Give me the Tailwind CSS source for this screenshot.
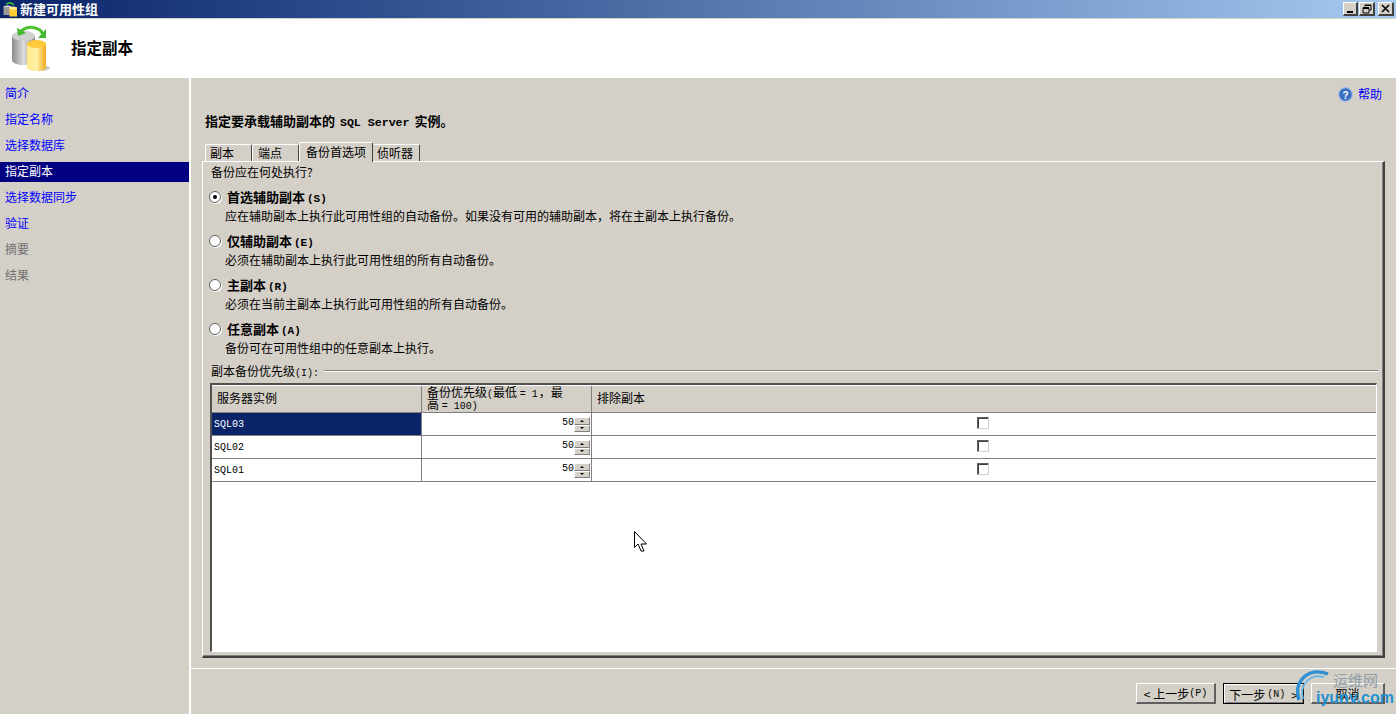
<!DOCTYPE html>
<html lang="zh">
<head>
<meta charset="utf-8">
<script src="https://cdn.jsdelivr.net/npm/@tailwindcss/browser@4"></script>
<title>新建可用性组</title>
</head>
<body class="m-0 overflow-hidden">
<div class="relative flex h-[714px] w-[1396px] flex-col overflow-hidden bg-[#d4d0c8] font-['Noto_Sans_CJK_SC',sans-serif] text-[12px] leading-[18px] text-black">

  <!-- title bar -->
  <div class="flex h-[18px] shrink-0 items-center bg-gradient-to-r from-[#0a246a] to-[#a6caf0]">
    <svg class="ml-[3px] h-[15px] w-[15px]" viewBox="0 0 15 15">
      <ellipse cx="4.500" cy="5" rx="4" ry="1.500" fill="#ddd"/><rect x=".5" y="5" width="8" height="8" fill="#999"/>
      <rect x="6.500" y="6" width="7.500" height="8.500" fill="#fc3"/><ellipse cx="10.200" cy="6" rx="3.800" ry="1.500" fill="#fe9"/>
      <path d="M3 2.500 Q7 -1 11 3" stroke="#3b3" stroke-width="1.500" fill="none"/>
    </svg>
    <span class="ml-[2px] text-[13px] font-bold text-white">新建可用性组</span>
    <div class="ml-auto mr-[2px] flex gap-[1px]">
      <div class="flex h-[14px] w-[15px] items-end justify-center border-t border-l border-r-2 border-b-2 border-t-white border-l-white border-r-[#404040] border-b-[#404040] bg-[#d4d0c8] pb-[1px]"><div class="h-[2px] w-[6px] bg-black"></div></div>
      <div class="flex h-[14px] w-[16px] items-center justify-center border-t border-l border-r-2 border-b-2 border-t-white border-l-white border-r-[#404040] border-b-[#404040] bg-[#d4d0c8]">
        <svg class="h-[10px] w-[10px]" viewBox="0 0 10 10" fill="none" stroke="#000"><path d="M3 2.500V1h6v5H7.500M3 1.500h6M1 4.500h6V9H1zM1 3.500h6" /></svg>
      </div>
      <div class="ml-[2px] flex h-[14px] w-[16px] items-center justify-center border-t border-l border-r-2 border-b-2 border-t-white border-l-white border-r-[#404040] border-b-[#404040] bg-[#d4d0c8]">
        <svg class="h-[9px] w-[9px]" viewBox="0 0 9 9" stroke="#000" stroke-width="1.600"><path d="M1 1l7 7M8 1l-7 7"/></svg>
      </div>
    </div>
  </div>

  <!-- header -->
  <div class="mt-[1px] flex h-[59px] shrink-0 items-center bg-white">
    <svg class="ml-[11px] h-[48px] w-[44px]" viewBox="0 0 44 48">
      <defs>
        <linearGradient id="g1" x1="0" x2="1"><stop offset="0" stop-color="#8a8a8a"/><stop offset=".5" stop-color="#dcdcdc"/><stop offset="1" stop-color="#8f8f8f"/></linearGradient>
        <linearGradient id="y1" x1="0" x2="1"><stop offset="0" stop-color="#ffe98a"/><stop offset=".5" stop-color="#fff2a8"/><stop offset="1" stop-color="#f2a91e"/></linearGradient>
      </defs>
      <ellipse cx="29" cy="43" rx="10" ry="3" fill="#ccc"/>
      <path d="M1 11v24c0 3 6 5 11 5s12-2 12-5V11z" fill="url(#g1)"/>
      <ellipse cx="12.500" cy="11" rx="11.500" ry="5" fill="#d0d0d0"/>
      <path d="M16 19v23c0 3 4 4 9.500 4S35 45 35 42V19z" fill="url(#y1)"/>
      <ellipse cx="25.500" cy="19" rx="9.500" ry="4" fill="#ffc93a"/>
      <path d="M10 6Q19 -1 29 5L32 9" fill="none" stroke="#4ec12c" stroke-width="3"/>
      <path d="M6 3l1 8 8-3z" fill="#43b82e"/><path d="M27 13h8V4z" fill="#43b82e"/>
    </svg>
    <span class="mb-[4px] ml-[16px] text-[15.5px] font-bold">指定副本</span>
  </div>

  <div class="flex min-h-0 flex-1">
    <!-- sidebar -->
    <nav class="flex w-[191px] shrink-0 flex-col border-r-2 border-white pt-[3px]">
      <div class="flex h-[26px] items-center pb-[2px] pl-[5px] text-[#0000ff]">简介</div>
      <div class="flex h-[26px] items-center pb-[2px] pl-[5px] text-[#0000ff]">指定名称</div>
      <div class="flex h-[26px] items-center pb-[2px] pl-[5px] text-[#0000ff]">选择数据库</div>
      <div class="flex h-[26px] items-center"><div class="flex h-[20px] w-full items-center bg-[#000080] pb-[2px] pl-[5px] text-white">指定副本</div></div>
      <div class="flex h-[26px] items-center pb-[2px] pl-[5px] text-[#0000ff]">选择数据同步</div>
      <div class="flex h-[26px] items-center pb-[2px] pl-[5px] text-[#0000ff]">验证</div>
      <div class="flex h-[26px] items-center pb-[2px] pl-[5px] text-[#707070]">摘要</div>
      <div class="flex h-[26px] items-center pb-[2px] pl-[5px] text-[#707070]">结果</div>
    </nav>

    <!-- main -->
    <main class="flex min-w-0 flex-1 flex-col">
      <div class="mt-[8px] flex h-[16px] items-center justify-end gap-[5px] pr-[14px]">
        <svg class="h-[15px] w-[15px]" viewBox="0 0 15 15"><circle cx="7.500" cy="7.500" r="6.800" fill="#3a6fc4" stroke="#9fbde6" stroke-width="1.200"/><text x="7.500" y="11.500" font-size="10" font-weight="700" text-anchor="middle" fill="#fff" font-family="Liberation Sans">?</text></svg>
        <span class="text-[#0000ff]">帮助</span>
      </div>
      <div class="ml-[14px] mt-[10px] h-[18px] text-[13px] font-bold">指定要承载辅助副本的 <span class="ml-[2px] font-['Liberation_Mono'] text-[11.6px]">SQL Server</span> <span class="ml-[2px]">实例。</span></div>

      <!-- tabs -->
      <div class="ml-[14px] mt-[12px] flex h-[19px] items-end">
        <div class="z-10 flex h-[17px] w-[47px] items-center rounded-t-[2px] border-t border-l border-r border-t-white border-l-white border-r-[#404040] pl-[4px]">副本</div>
        <div class="flex h-[17px] w-[47px] items-center rounded-t-[2px] border-t border-l border-r border-t-white border-l-white border-r-[#404040] pl-[5px]">端点</div>
        <div class="relative z-10 -mb-[1px] flex h-[20px] w-[74px] items-start rounded-t-[2px] border-t border-l border-r border-t-white border-l-white border-r-[#404040] bg-[#d4d0c8] pl-[6px]">备份首选项</div>
        <div class="flex h-[17px] w-[47px] items-center rounded-t-[2px] border-t border-r border-t-white border-r-[#404040] pl-[4px]">侦听器</div>
      </div>

      <!-- panel -->
      <div class="ml-[11px] mr-[11px] flex h-[497px] flex-col border-t border-l border-r-2 border-b-2 border-t-white border-l-white border-r-[#404040] border-b-[#404040] pl-[6px] pr-[5px] shadow-[inset_-1px_-1px_0_#808080]">
        <div class="ml-[2px] h-[18px] leading-[20px]">备份应在何处执行?</div>

        <div class="mt-[8px]">
          <div class="flex h-[18px] items-center">
            <span class="flex h-[12px] w-[12px] items-center justify-center rounded-full border border-[#606060] bg-white shadow-[1px_1px_0_#fff]"><span class="h-[4px] w-[4px] rounded-full bg-black"></span></span>
            <span class="ml-[6px] mt-[2px] text-[13px] font-bold">首选辅助副本<span class="ml-[2px] font-['Liberation_Mono'] text-[11px]">(S)</span></span>
          </div>
          <div class="ml-[16px] h-[18px] leading-[20px]">应在辅助副本上执行此可用性组的自动备份。如果没有可用的辅助副本，将在主副本上执行备份。</div>
        </div>
        <div class="mt-[8px]">
          <div class="flex h-[18px] items-center">
            <span class="h-[12px] w-[12px] rounded-full border border-[#606060] bg-white shadow-[1px_1px_0_#fff]"></span>
            <span class="ml-[6px] mt-[2px] text-[13px] font-bold">仅辅助副本<span class="ml-[2px] font-['Liberation_Mono'] text-[11px]">(E)</span></span>
          </div>
          <div class="ml-[16px] h-[18px] leading-[20px]">必须在辅助副本上执行此可用性组的所有自动备份。</div>
        </div>
        <div class="mt-[8px]">
          <div class="flex h-[18px] items-center">
            <span class="h-[12px] w-[12px] rounded-full border border-[#606060] bg-white shadow-[1px_1px_0_#fff]"></span>
            <span class="ml-[6px] mt-[2px] text-[13px] font-bold">主副本<span class="ml-[2px] font-['Liberation_Mono'] text-[11px]">(R)</span></span>
          </div>
          <div class="ml-[16px] h-[18px] leading-[20px]">必须在当前主副本上执行此可用性组的所有自动备份。</div>
        </div>
        <div class="mt-[8px]">
          <div class="flex h-[18px] items-center">
            <span class="h-[12px] w-[12px] rounded-full border border-[#606060] bg-white shadow-[1px_1px_0_#fff]"></span>
            <span class="ml-[6px] mt-[2px] text-[13px] font-bold">任意副本<span class="ml-[2px] font-['Liberation_Mono'] text-[11px]">(A)</span></span>
          </div>
          <div class="ml-[16px] h-[18px] leading-[20px]">备份可在可用性组中的任意副本上执行。</div>
        </div>

        <div class="ml-[2px] mt-[6px] flex h-[18px] items-center">
          <span class="mt-[3px]">副本备份优先级<span class="font-['Liberation_Mono'] text-[10px]">(I):</span></span>
          <div class="ml-[5px] h-[2px] flex-1 border-t border-b border-t-[#808080] border-b-white"></div>
        </div>

        <!-- grid -->
        <div class="ml-[1px] mr-[1px] mt-[3px] h-[269px] border-t-2 border-l-2 border-r border-b border-t-[#505050] border-l-[#505050] border-r-white border-b-white bg-white">
          <div class="grid h-[28px] grid-cols-[210px_170px_1fr] border-t border-b border-t-white border-b-[#808080] bg-[#d4d0c8]">
            <div class="flex items-center border-r border-r-[#808080] pb-[2px] pl-[5px]">服务器实例</div>
            <div class="border-r border-r-[#808080] pl-[5px]">
              <div class="h-[12px] leading-[12px]">备份优先级<span class="font-['Liberation_Mono'] text-[10px] leading-[12px]">(</span>最低 <span class="font-['Liberation_Mono'] text-[10px] leading-[12px]">= 1</span><span class="ml-[1px]">，最</span></div>
              <div class="h-[12px] leading-[12px]">高 <span class="font-['Liberation_Mono'] text-[10px] leading-[12px]">= 100)</span></div>
            </div>
            <div class="flex items-center pb-[2px] pl-[5px]">排除副本</div>
          </div>

          <div class="grid h-[23px] grid-cols-[210px_170px_1fr] border-b border-b-[#808080]">
            <div class="flex items-center border-r border-r-[#808080] bg-[#0a246a] pl-[2px] pt-[2px] font-['Liberation_Mono'] text-[10px] text-white">SQL03</div>
            <div class="flex items-center justify-end border-r border-r-[#808080] pr-[1px]">
              <span class="mb-[2px] font-['Liberation_Mono'] text-[10px] leading-[10px]">50</span>
              <div class="flex h-[15px] w-[16px] flex-col">
                <div class="flex h-[8px] items-center justify-center border-t border-l border-r border-b border-t-white border-l-white border-r-[#808080] border-b-[#808080] bg-[#d4d0c8]"><span class="h-0 w-0 border-x-[2px] border-b-[2px] border-x-transparent border-b-black"></span></div>
                <div class="flex h-[7px] items-center justify-center border-t border-l border-r border-b border-t-white border-l-white border-r-[#808080] border-b-[#808080] bg-[#d4d0c8]"><span class="h-0 w-0 border-x-[2px] border-t-[2px] border-x-transparent border-t-black"></span></div>
              </div>
            </div>
            <div class="flex items-center justify-center">
              <span class="mb-[2px] mr-[3px] h-[12px] w-[12px] border border-t-[#606060] border-l-[#606060] border-r-[#d4d0c8] border-b-[#d4d0c8] bg-white shadow-[inset_1px_1px_0_#404040]"></span>
            </div>
          </div>
          <div class="grid h-[23px] grid-cols-[210px_170px_1fr] border-b border-b-[#808080]">
            <div class="flex items-center border-r border-r-[#808080] pl-[2px] pt-[2px] font-['Liberation_Mono'] text-[10px]">SQL02</div>
            <div class="flex items-center justify-end border-r border-r-[#808080] pr-[1px]">
              <span class="mb-[2px] font-['Liberation_Mono'] text-[10px] leading-[10px]">50</span>
              <div class="flex h-[15px] w-[16px] flex-col">
                <div class="flex h-[8px] items-center justify-center border-t border-l border-r border-b border-t-white border-l-white border-r-[#808080] border-b-[#808080] bg-[#d4d0c8]"><span class="h-0 w-0 border-x-[2px] border-b-[2px] border-x-transparent border-b-black"></span></div>
                <div class="flex h-[7px] items-center justify-center border-t border-l border-r border-b border-t-white border-l-white border-r-[#808080] border-b-[#808080] bg-[#d4d0c8]"><span class="h-0 w-0 border-x-[2px] border-t-[2px] border-x-transparent border-t-black"></span></div>
              </div>
            </div>
            <div class="flex items-center justify-center">
              <span class="mb-[2px] mr-[3px] h-[12px] w-[12px] border border-t-[#606060] border-l-[#606060] border-r-[#d4d0c8] border-b-[#d4d0c8] bg-white shadow-[inset_1px_1px_0_#404040]"></span>
            </div>
          </div>
          <div class="grid h-[23px] grid-cols-[210px_170px_1fr] border-b border-b-[#808080]">
            <div class="flex items-center border-r border-r-[#808080] pl-[2px] pt-[2px] font-['Liberation_Mono'] text-[10px]">SQL01</div>
            <div class="flex items-center justify-end border-r border-r-[#808080] pr-[1px]">
              <span class="mb-[2px] font-['Liberation_Mono'] text-[10px] leading-[10px]">50</span>
              <div class="flex h-[15px] w-[16px] flex-col">
                <div class="flex h-[8px] items-center justify-center border-t border-l border-r border-b border-t-white border-l-white border-r-[#808080] border-b-[#808080] bg-[#d4d0c8]"><span class="h-0 w-0 border-x-[2px] border-b-[2px] border-x-transparent border-b-black"></span></div>
                <div class="flex h-[7px] items-center justify-center border-t border-l border-r border-b border-t-white border-l-white border-r-[#808080] border-b-[#808080] bg-[#d4d0c8]"><span class="h-0 w-0 border-x-[2px] border-t-[2px] border-x-transparent border-t-black"></span></div>
              </div>
            </div>
            <div class="flex items-center justify-center">
              <span class="mb-[2px] mr-[3px] h-[12px] w-[12px] border border-t-[#606060] border-l-[#606060] border-r-[#d4d0c8] border-b-[#d4d0c8] bg-white shadow-[inset_1px_1px_0_#404040]"></span>
            </div>
          </div>
        </div>
      </div>

      <!-- footer -->
      <div class="mt-[10px] flex flex-1 items-start justify-end gap-[7px] border-t border-t-white pt-[14px] pr-[11px]">
        <div class="flex h-[21px] w-[80px] items-center justify-center border-t border-l border-r-2 border-b-2 border-t-white border-l-white border-r-[#606060] border-b-[#606060] pt-[2px]">&lt; 上一步<span class="font-['Liberation_Mono'] text-[10px]">(P)</span></div>
        <div class="flex h-[21px] w-[81px] items-center justify-center border border-black pt-[2px] shadow-[inset_1px_1px_0_#fff,inset_-1px_-1px_0_#808080]">下一步<span class="ml-[2px] font-['Liberation_Mono'] text-[10px]">(N)</span><span class="ml-[6px]">&gt;</span></div>
        <div class="flex h-[21px] w-[74px] items-center justify-center border-t border-l border-r-2 border-b-2 border-t-white border-l-white border-r-[#606060] border-b-[#606060] pt-[2px]">取消</div>
      </div>
    </main>
  </div>

  <!-- mouse cursor -->
  <svg class="absolute left-[634px] top-[531px] h-[22px] w-[14px]" viewBox="0 0 14 22"><path d="M.5.500V16.500L4 13l3 7h3l-3-7h5.500z" fill="#fff" stroke="#000"/></svg>

  <!-- watermark -->
  <div class="absolute left-[1294px] top-[666px] h-[48px] w-[102px]">
    <svg class="absolute left-0 top-0 h-[44px] w-[44px]" viewBox="0 0 44 44" fill="none"><path d="M5 34C-1 16 14 0 34 8" stroke="#2f8fd0" stroke-width="3.500"/><path d="M9 33C5 20 15 7 30 11" stroke="#6ab8e8" stroke-width="2"/></svg>
    <span class="absolute left-[39px] top-[5px] text-[15px] leading-[18px] text-[#8f9ea6]">运维网</span>
    <span class="absolute left-[22px] top-[22px] font-['Liberation_Sans'] text-[16px] font-bold leading-[20px] text-[#1e90d0]">iyunv.com</span>
  </div>
</div>
</body>
</html>
